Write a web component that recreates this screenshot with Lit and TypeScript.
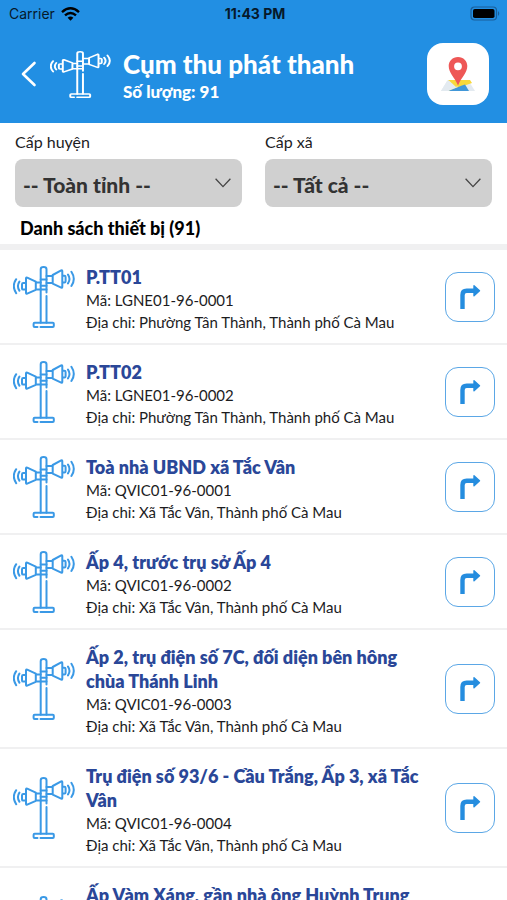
import { LitElement, html, css, svg } from "lit";
import { customElement, property } from "lit/decorators.js";

interface Device {
  name: string;
  code: string;
  address: string;
}

const TAN_THANH = "Phường Tân Thành, Thành phố Cà Mau";
const TAC_VAN = "Xã Tắc Vân, Thành phố Cà Mau";

const devices: Device[] = [
  { name: "P.TT01", code: "LGNE01-96-0001", address: TAN_THANH },
  { name: "P.TT02", code: "LGNE01-96-0002", address: TAN_THANH },
  { name: "Toà nhà UBND xã Tắc Vân", code: "QVIC01-96-0001", address: TAC_VAN },
  { name: "Ấp 4, trước trụ sở Ấp 4", code: "QVIC01-96-0002", address: TAC_VAN },
  { name: "Ấp 2, trụ điện số 7C, đối diện bên hông chùa Thánh Linh", code: "QVIC01-96-0003", address: TAC_VAN },
  { name: "Trụ điện số 93/6 - Cầu Trắng, Ấp 3, xã Tắc Vân", code: "QVIC01-96-0004", address: TAC_VAN },
  { name: "Ấp Vàm Xáng, gần nhà ông Huỳnh Trung Trực", code: "QVIC01-96-0005", address: TAC_VAN },
];

// Loudspeaker pole: mast and base, a horn on each side, sound waves.
const speakerShape = svg`
  <path d="M27.700 57.800V4.200Q27.700 2 30.600 2Q33.500 2 33.500 4.200V27.500M33.500 31V57.800"/>
  <path d="M24.500 62H21.600Q20.600 62 20.600 61V58.800Q20.600 57.800 21.600 57.800H39.800Q40.800 57.800 40.800 58.800V61Q40.800 62 39.800 62H27.500"/>
  <path d="M33.500 11H39.700V18H33.500M39.700 10L48.200 5.400Q49.300 5 49.300 6.200V21.800Q49.300 23 48.200 22.600L39.700 18.600ZM49.300 10.800H51.400Q52.600 10.800 52.600 12V16.200Q52.600 17.400 51.400 17.400H49.300"/>
  <path d="M55 9.600Q58 14 55 18.400M58.400 6.800Q63.200 14 58.400 21"/>
  <path d="M27.700 17.400H22.800V24.400H27.700M22.800 16.600L14.200 12.600Q13 12.200 13 13.400V27.800Q13 29 14.200 28.600L22.800 24.800ZM13 18H10.200Q9 18 9 19.200V23.400Q9 24.600 10.200 24.600H13"/>
  <path d="M6.400 16.600Q3.400 21 6.400 25.600M3.200 14.200Q-1.600 21 3.200 28.200"/>
  <path d="M27.700 20.800H33.500M27.700 24.400H33.500M27.700 14.400H33.500"/>
`;

@customElement("speaker-icon")
class SpeakerIcon extends LitElement {
  static styles = css`
    :host {
      display: block;
    }
    svg {
      display: block;
      width: 100%;
      height: 100%;
      fill: none;
      stroke: currentColor;
      stroke-linecap: round;
      stroke-linejoin: round;
    }
    path {
      stroke-width: 2px;
    }
  `;
  render() {
    return html`<svg viewBox="0 1 62 62" preserveAspectRatio="none" aria-hidden="true">${speakerShape}</svg>`;
  }
}

@customElement("status-bar")
class StatusBar extends LitElement {
  static styles = css`
    :host {
      display: grid;
      grid-template-columns: 1fr auto 1fr;
      align-items: center;
      height: 27px;
      padding: 0 6px 0 9px;
      font: 14px "Inter", sans-serif;
      color: #06192b;
    }
    .carrier {
      display: flex;
      align-items: center;
      gap: 6px;
    }
    .time {
      font-size: 14px;
      font-weight: 700;
    }
    .battery {
      justify-self: end;
    }
    svg {
      display: block;
    }
  `;
  render() {
    return html`
      <span class="carrier">
        Carrier
        <svg width="19" height="14" viewBox="0 0 19 14" fill="none" stroke="#000" stroke-width="2.4" aria-hidden="true">
          <path d="M1 5.200Q9.500-2.500 18 5.200" />
          <path d="M4 8.400Q9.500 3.400 15 8.400" />
          <path d="M6.600 10.700Q9.500 8.300 12.400 10.700L9.500 13.700Z" fill="#000" stroke="none" />
        </svg>
      </span>
      <span class="time">11:43 PM</span>
      <svg class="battery" width="31" height="15" viewBox="0 0 31 15" aria-hidden="true">
        <rect x="1" y="1" width="25.5" height="13" rx="3.5" fill="none" stroke="#1a5f9a" stroke-width="1.2" />
        <rect x="3" y="3" width="21.5" height="9" rx="1.8" fill="#000" />
        <path d="M28 5Q30.500 7.500 28 10Z" fill="#1a5f9a" />
      </svg>
    `;
  }
}

@customElement("device-row")
class DeviceRow extends LitElement {
  @property({ attribute: false }) device!: Device;

  static styles = css`
    :host {
      display: grid;
      grid-template-columns: 62px 1fr 50px;
      column-gap: 11px;
      align-items: center;
      padding: 0 12px 0 13px;
      border-bottom: 2px solid #f0f0f1;
    }
    speaker-icon {
      height: 62px;
      color: #3a99e6;
    }
    .info {
      padding: 15px 0 10px;
    }
    .name {
      margin: 0;
      font-size: 18px;
      line-height: 24px;
      font-weight: 800;
      color: #2a4798;
    }
    .meta {
      margin: 0;
      font-size: 15px;
      line-height: 22px;
      color: #1c1c1e;
    }
    .go {
      display: grid;
      place-items: center;
      height: 50px;
      padding: 0;
      border: 1px solid #5ba7e6;
      border-radius: 13px;
      background: #fff;
    }
  `;
  render() {
    const { name, code, address } = this.device;
    return html`
      <speaker-icon></speaker-icon>
      <div class="info">
        <h2 class="name">${name}</h2>
        <p class="meta">Mã: ${code}</p>
        <p class="meta">Địa chỉ: ${address}</p>
      </div>
      <button class="go" type="button" aria-label="Chỉ đường">
        <svg width="22" height="26" viewBox="0 0 22 26" aria-hidden="true">
          <path d="M3.500 25V11Q3.500 6.800 7.700 6.800H16" fill="none" stroke="#258ddf" stroke-width="4.400" />
          <path d="M15 1.800L20.500 6.800L15 11.800Z" fill="#258ddf" stroke="#258ddf" stroke-width="1.400" stroke-linejoin="round" />
        </svg>
      </button>
    `;
  }
}

@customElement("app-root")
class AppRoot extends LitElement {
  static styles = css`
    :host {
      display: flex;
      flex-direction: column;
      height: 100vh;
      background: #fff;
      font-family: "Lato", "Noto Sans", sans-serif;
      color: #000;
    }
    .top {
      background: #228fe3;
      color: #fff;
    }
    .bar {
      display: flex;
      align-items: center;
      padding: 16px 18px 18px 20px;
    }
    .bar button {
      flex: none;
      display: grid;
      place-items: center;
      padding: 0;
      border: 0;
      background: none;
    }
    .back {
      width: 18px;
      height: 40px;
    }
    .bar speaker-icon {
      flex: none;
      width: 61px;
      height: 47px;
      margin-left: 12px;
    }
    .heading {
      flex: 1;
      margin-left: 12px;
      padding-top: 4px;
    }
    h1 {
      margin: 0;
      font-size: 26px;
      line-height: 32px;
      font-weight: 900;
    }
    .count {
      margin: 0;
      font-size: 17px;
      line-height: 24px;
      font-weight: 900;
    }
    .bar .map {
      width: 62px;
      height: 62px;
      border-radius: 16px;
      background: #fff;
    }
    .filters {
      display: grid;
      grid-template-columns: 1fr 1fr;
      gap: 23px;
      padding: 8px 15px 0;
    }
    .filter label {
      display: block;
      font-size: 16px;
      line-height: 22px;
      color: #1c1c1e;
    }
    .picker {
      display: grid;
      align-items: center;
      margin-top: 6px;
    }
    .picker > * {
      grid-area: 1 / 1;
    }
    select {
      appearance: none;
      width: 100%;
      height: 48px;
      padding: 2px 36px 0 8px;
      border: 0;
      border-radius: 8px;
      background: #d0d0d0;
      font: 900 21px "Lato", "Noto Sans", sans-serif;
      color: #333;
    }
    .picker svg {
      justify-self: end;
      margin-right: 11px;
      pointer-events: none;
    }
    .list-title {
      margin: 0;
      padding: 9px 20px 4px;
      border-bottom: 6px solid #f0f0f1;
      font-size: 18px;
      line-height: 24px;
      font-weight: 900;
    }
    .list {
      flex: 1;
      min-height: 0;
      overflow-y: auto;
      scrollbar-width: none;
    }
  `;

  private picker(id: string, label: string, value: string) {
    return html`
      <div class="filter">
        <label for=${id}>${label}</label>
        <div class="picker">
          <select id=${id}>
            <option>${value}</option>
          </select>
          <svg width="16" height="10" viewBox="0 0 16 10" fill="none" stroke="#444" stroke-width="1.3" aria-hidden="true">
            <path d="M.6.800L8 8.600L15.400.800" />
          </svg>
        </div>
      </div>
    `;
  }

  render() {
    return html`
      <header class="top">
        <status-bar></status-bar>
        <div class="bar">
          <button class="back" type="button" aria-label="Quay lại">
            <svg width="18" height="26" viewBox="0 0 18 26" fill="none" stroke="#fff" stroke-width="2.6" stroke-linecap="round" stroke-linejoin="round">
              <path d="M14.500 2L3 13L14.500 24" />
            </svg>
          </button>
          <speaker-icon></speaker-icon>
          <div class="heading">
            <h1>Cụm thu phát thanh</h1>
            <p class="count">Số lượng: 91</p>
          </div>
          <button class="map" type="button" aria-label="Bản đồ">
            <svg width="34" height="36" viewBox="0 0 34 36" aria-hidden="true">
              <path d="M7 24H27L34 35H0Z" fill="#e3eaf0" />
              <path d="M7 24H29L31 27L8 35Z" fill="#f8d83a" />
              <path d="M7 35L21 29.500L24 28.500L28 35Z" fill="#4197d8" />
              <path d="M8 24L17 31L7 35H0L6 25Z" fill="#e3eaf0" />
              <path d="M7.500 24H14L18 29L15 31Z" fill="#f8d83a" />
              <path fill-rule="evenodd" d="M17 1C11.500 1 7.700 5 7.700 10C7.700 17 13.500 21 17 29.500C20.500 21 26.300 17 26.300 10C26.300 5 22.500 1 17 1ZM17 6.400A3.900 3.900 0 1 1 17 14.200A3.900 3.900 0 1 1 17 6.400Z" fill="#ee5756" />
            </svg>
          </button>
        </div>
      </header>
      <section class="filters">
        ${this.picker("district", "Cấp huyện", "-- Toàn tỉnh --")}
        ${this.picker("commune", "Cấp xã", "-- Tất cả --")}
      </section>
      <h2 class="list-title">Danh sách thiết bị (91)</h2>
      <main class="list">
        ${devices.map((d) => html`<device-row .device=${d}></device-row>`)}
      </main>
    `;
  }
}
